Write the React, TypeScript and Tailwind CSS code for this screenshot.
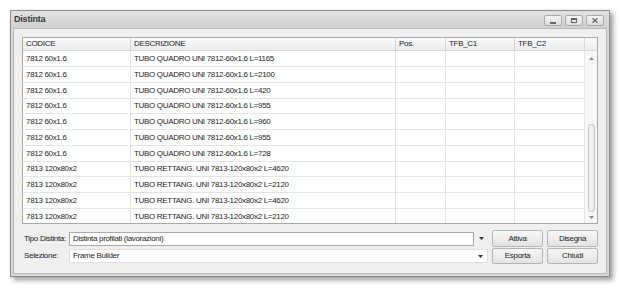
import React from "react";

const rows: [string, string][] = [
  ["7812 60x1.6", "TUBO QUADRO UNI 7812-60x1.6 L=1165"],
  ["7812 60x1.6", "TUBO QUADRO UNI 7812-60x1.6 L=2100"],
  ["7812 60x1.6", "TUBO QUADRO UNI 7812-60x1.6 L=420"],
  ["7812 60x1.6", "TUBO QUADRO UNI 7812-60x1.6 L=955"],
  ["7812 60x1.6", "TUBO QUADRO UNI 7812-60x1.6 L=960"],
  ["7812 60x1.6", "TUBO QUADRO UNI 7812-60x1.6 L=955"],
  ["7812 60x1.6", "TUBO QUADRO UNI 7812-60x1.6 L=728"],
  ["7813 120x80x2", "TUBO RETTANG. UNI 7813-120x80x2 L=4620"],
  ["7813 120x80x2", "TUBO RETTANG. UNI 7813-120x80x2 L=2120"],
  ["7813 120x80x2", "TUBO RETTANG. UNI 7813-120x80x2 L=4620"],
  ["7813 120x80x2", "TUBO RETTANG. UNI 7813-120x80x2 L=2120"],
];

const cols = "grid grid-cols-[108px_265px_50px_69px_70px]";

function TitleButton({ children }: { children: React.ReactNode }) {
  return (
    <div className="w-[18px] h-[11px] rounded-[2px] border border-[#ababab] bg-gradient-to-b from-[#f4f4f4] to-[#dcdcdc] flex items-center justify-center">
      {children}
    </div>
  );
}

function Arrow() {
  return (
    <svg width="5" height="3" viewBox="0 0 5 3">
      <path d="M0 0h5L2.5 3z" fill="#333" />
    </svg>
  );
}

function Btn({ label, w }: { label: string; w: string }) {
  return (
    <div
      className={`${w} h-full rounded-[2px] border border-[#b4b4b4] bg-gradient-to-b from-[#f7f7f7] to-[#e3e3e3] flex items-center justify-center text-[#222]`}
    >
      {label}
    </div>
  );
}

export default function App() {
  return (
    <div
      className="w-[621px] h-[287px] bg-white p-[10px] text-[8px] tracking-[-0.32px] text-[#1c1c1c]"
      style={{ fontFamily: '"Liberation Sans", Arial, sans-serif' }}
    >
      <div className="w-[600px] h-[267px] border border-[#8c8c8c] bg-[#d8d8d8] shadow-[3px_3px_5px_rgba(0,0,0,0.4)] flex flex-col">
        <div className="h-[17px] flex items-center justify-between pl-[3px] pr-[5px] bg-gradient-to-b from-[#e2e2e2] to-[#d0d0d0]">
          <span className="text-[9px] font-bold tracking-[-0.2px] text-[#3a3a3a] mt-[1px]">Distinta</span>
          <div className="flex gap-[3px] mt-[2px]">
            <TitleButton>
              <div className="w-[6px] h-[2px] bg-[#666] mt-[4px]" />
            </TitleButton>
            <TitleButton>
              <div className="w-[6px] h-[5px] border border-[#666] border-t-2" />
            </TitleButton>
            <TitleButton>
              <svg width="6" height="5" viewBox="0 0 6 5">
                <path d="M0.5 0.3l5 4.4M5.5 0.3l-5 4.4" stroke="#666" strokeWidth="1.3" />
              </svg>
            </TitleButton>
          </div>
        </div>
        <div className="flex-1 mx-[2px] mb-[2px] border border-[#b8b8b8] bg-[#efefef] pt-[8px] px-[8px] flex flex-col">
          <div className="h-[187px] border border-[#a8a8a8] bg-white flex flex-col overflow-hidden">
            <div className="flex h-[13px] shrink-0 bg-gradient-to-b from-[#fafafa] to-[#ececec] border-b border-[#d6d6d6]">
              <div className={`${cols} flex-1`}>
                {["CODICE", "DESCRIZIONE", "Pos.", "TFB_C1", "TFB_C2"].map((h) => (
                  <div key={h} className="border-r border-[#d6d6d6] pl-[3px] leading-[12px]">
                    {h}
                  </div>
                ))}
              </div>
              <div className="w-[12px]" />
            </div>
            <div className="flex flex-1 overflow-hidden">
              <div className="flex-1 overflow-hidden">
                {rows.map(([c, d], i) => (
                  <div key={i} className={`${cols} h-[15.75px]`}>
                    <div className="border-r border-b border-[#e4e4e4] pl-[3px] leading-[15px]">{c}</div>
                    <div className="border-r border-b border-[#e4e4e4] pl-[3px] leading-[15px]">{d}</div>
                    <div className="border-r border-b border-[#e4e4e4]" />
                    <div className="border-r border-b border-[#e4e4e4]" />
                    <div className="border-r border-b border-[#e4e4e4]" />
                  </div>
                ))}
              </div>
              <div className="w-[12px] bg-[#f7f7f7] flex flex-col items-center pt-[6px] pb-[4px]">
                <svg width="5" height="3" viewBox="0 0 5 3">
                  <path d="M0 3h5L2.5 0z" fill="#888" />
                </svg>
                <div className="flex-1" />
                <div className="w-[7px] h-[88px] rounded-[3px] border border-[#c4c4c4] bg-[#f0f0f0]" />
                <div className="h-[4px]" />
                <svg width="5" height="3" viewBox="0 0 5 3">
                  <path d="M0 0h5L2.5 3z" fill="#888" />
                </svg>
              </div>
            </div>
          </div>
          <div className="mt-[6px] flex items-center h-[17px]">
            <div className="w-[47px] pl-[2px]">Tipo Distinta:</div>
            <div className="flex-1 flex items-center h-[14px]">
              <div className="flex-1 h-full border border-[#a9a9a9] bg-white pl-[3px] leading-[12px]">
                Distinta profilati (lavorazioni)
              </div>
              <div className="w-[14px] flex justify-center">
                <Arrow />
              </div>
            </div>
            <div className="ml-[4px] flex gap-[4px] h-full">
              <Btn label="Attiva" w="w-[51px]" />
              <Btn label="Disegna" w="w-[51px]" />
            </div>
          </div>
          <div className="mt-[1px] flex items-center h-[16px]">
            <div className="w-[47px] pl-[2px]">Selezione:</div>
            <div className="flex-1 flex items-center h-[14px] border border-[#dedede] bg-white">
              <div className="flex-1 pl-[3px] leading-[12px]">Frame Builder</div>
              <div className="w-[14px] flex justify-center">
                <Arrow />
              </div>
            </div>
            <div className="ml-[4px] flex gap-[4px] h-full">
              <Btn label="Esporta" w="w-[51px]" />
              <Btn label="Chiudi" w="w-[51px]" />
            </div>
          </div>
        </div>
      </div>
    </div>
  );
}
